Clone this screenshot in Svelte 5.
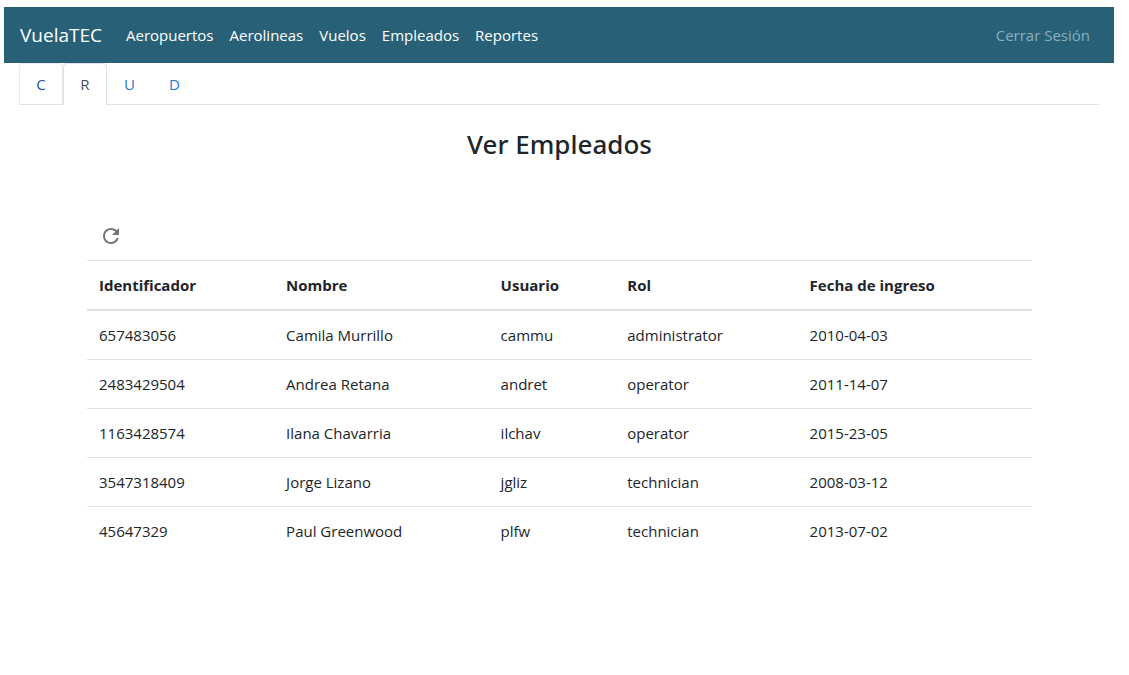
<script>
  const links = ['Aeropuertos', 'Aerolineas', 'Vuelos', 'Empleados', 'Reportes'];
  const tabs = ['C', 'R', 'U', 'D'];
  let active = $state('R');
  const columns = ['Identificador', 'Nombre', 'Usuario', 'Rol', 'Fecha de ingreso'];
  const employees = [
    ['657483056', 'Camila Murrillo', 'cammu', 'administrator', '2010-04-03'],
    ['2483429504', 'Andrea Retana', 'andret', 'operator', '2011-14-07'],
    ['1163428574', 'Ilana Chavarria', 'ilchav', 'operator', '2015-23-05'],
    ['3547318409', 'Jorge Lizano', 'jgliz', 'technician', '2008-03-12'],
    ['45647329', 'Paul Greenwood', 'plfw', 'technician', '2013-07-02']
  ];
</script>

<div class="page">
  <nav class="navbar">
    <a class="brand" href="#inicio">VuelaTEC</a>
    <div class="links">
      {#each links as link}
        <a href={'#' + link.toLowerCase()}>{link}</a>
      {/each}
    </div>
    <a class="logout" href="#salir">Cerrar Sesión</a>
  </nav>

  <div class="tabs" role="tablist">
    {#each tabs as tab}
      <button
        role="tab"
        class:first={tab === 'C'}
        class:active={active === tab}
        aria-selected={active === tab}
        onclick={() => (active = tab)}>{tab}</button>
    {/each}
  </div>

  <main>
    <h1>Ver Empleados</h1>
    <div class="panel">
      <button class="refresh" aria-label="Actualizar">
        <svg viewBox="0 0 24 24" width="24" height="24" fill="currentColor">
          <path d="M17.65 6.35C16.2 4.9 14.21 4 12 4c-4.42 0-7.99 3.58-7.99 8s3.57 8 7.99 8c3.73 0 6.84-2.55 7.73-6h-2.08c-.82 2.33-3.04 4-5.65 4-3.31 0-6-2.69-6-6s2.69-6 6-6c1.66 0 3.14.69 4.22 1.78L13 11h7V4l-2.35 2.35z" />
        </svg>
      </button>
      <table>
        <colgroup>
          <col class="id" /><col class="name" /><col class="user" /><col class="role" /><col />
        </colgroup>
        <thead>
          <tr>
            {#each columns as column}<th scope="col">{column}</th>{/each}
          </tr>
        </thead>
        <tbody>
          {#each employees as row}
            <tr>
              {#each row as cell}<td>{cell}</td>{/each}
            </tr>
          {/each}
        </tbody>
      </table>
    </div>
  </main>
</div>

<style>
  :global(body) {
    background: #fff;
  }
  .page {
    padding: 7px 15px 0 4px;
    font: 15px/24px "Segoe UI", "Open Sans", "Noto Sans", sans-serif;
    color: #212529;
  }
  a {
    text-decoration: none;
  }
  button {
    font: inherit;
    cursor: pointer;
  }
  .navbar {
    display: flex;
    align-items: center;
    height: 56px;
    padding: 0 16px;
    background: #286177;
  }
  .brand {
    margin-right: 16px;
    font-size: 19px;
    color: #fff;
  }
  .links {
    display: flex;
  }
  .links a {
    padding: 8px;
    color: #fff;
  }
  .logout {
    margin-left: auto;
    padding: 8px;
    color: #89afbf;
  }
  .tabs {
    display: flex;
    margin: 0 15px;
    border-bottom: 1px solid #dee2e6;
  }
  .tabs button {
    min-width: 44px;
    margin-bottom: -1px;
    padding: 8px 16px;
    border: 1px solid transparent;
    border-radius: 4px 4px 0 0;
    background: none;
    color: #2478dc;
  }
  .tabs .first {
    border-color: #e9ecef #e9ecef #dee2e6;
    color: #1d56a0;
  }
  .tabs .active {
    border-color: #dee2e6 #dee2e6 #fff;
    background: #fff;
    color: #495057;
  }
  main {
    padding: 22px 82px 0 83px;
  }
  h1 {
    margin: 0;
    font-family: "Segoe UI", "Noto Sans", sans-serif;
    font-size: 26px;
    line-height: 34px;
    font-weight: 500;
    text-align: center;
  }
  .panel {
    margin-top: 51px;
  }
  .refresh {
    display: block;
    padding: 12px;
    border: 0;
    background: none;
    color: #757575;
  }
  .refresh svg {
    display: block;
  }
  table {
    width: 100%;
    table-layout: fixed;
    border-collapse: collapse;
  }
  .id { width: 19.8%; }
  .name { width: 22.7%; }
  .user { width: 13.4%; }
  .role { width: 19.3%; }
  th,
  td {
    padding: 12px;
    border-top: 1px solid #dee2e6;
    text-align: left;
  }
  th {
    border-bottom: 2px solid #dee2e6;
    font-weight: 700;
  }
</style>
